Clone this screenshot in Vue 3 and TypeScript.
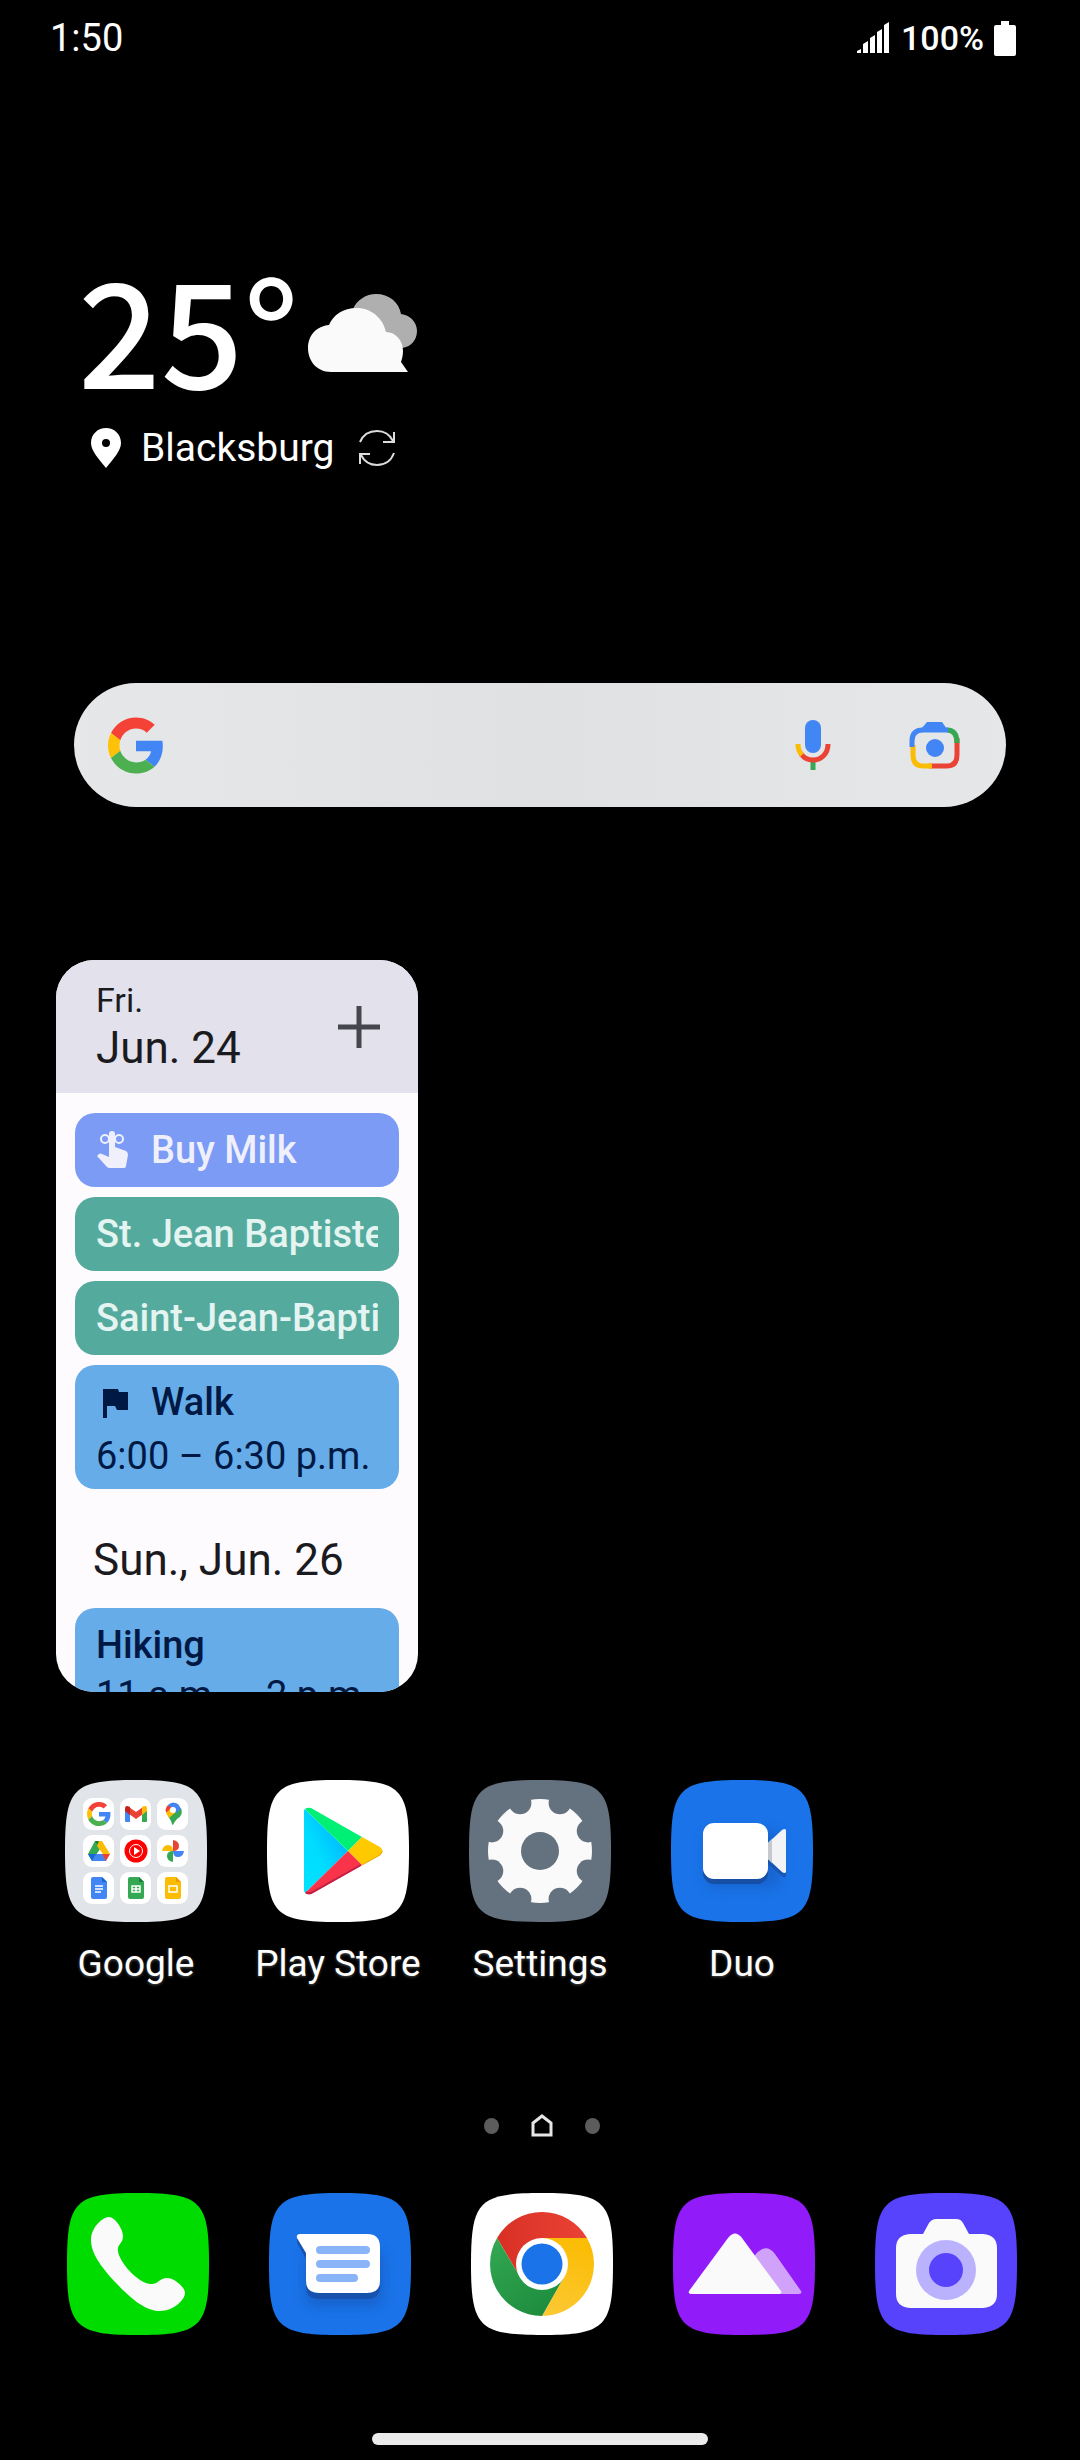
<script setup lang="ts">
import { ref } from 'vue'

interface CalendarEvent {
  title: string
  tone: 'task' | 'holiday' | 'plan'
  icon?: 'reminder' | 'flag'
  time?: string
}

const query = ref('')

const today: CalendarEvent[] = [
  { title: 'Buy Milk', tone: 'task', icon: 'reminder' },
  { title: 'St. Jean Baptiste Day', tone: 'holiday' },
  { title: 'Saint-Jean-Baptiste Day', tone: 'holiday' },
  { title: 'Walk', tone: 'plan', icon: 'flag', time: '6:00 – 6:30 p.m.' },
]
const sunday: CalendarEvent[] = [{ title: 'Hiking', tone: 'plan', time: '11 a.m. – 2 p.m.' }]

const squircle = 'M0 71C0 8 8 0 71 0S142 8 142 71 134 142 71 142 0 134 0 71Z'
const gearCuts = Array.from({ length: 8 }, (_, i) => {
  const a = ((22.5 + i * 45) * Math.PI) / 180
  return { x: 71 + 52 * Math.cos(a), y: 71 + 52 * Math.sin(a) }
})
const tiles = [0, 1, 2, 3, 4, 5, 6, 7, 8].map((i) => ({
  x: 18 + (i % 3) * 37,
  y: 18 + Math.floor(i / 3) * 37,
}))
</script>

<template>
  <div class="phone">
    <svg width="0" height="0" class="defs" aria-hidden="true">
      <defs>
        <symbol id="google-g" viewBox="0 0 48 48">
          <path fill="#f44336" d="M24 9.5c3.54 0 6.71 1.22 9.21 3.6l6.85-6.85C35.9 2.38 30.47 0 24 0 14.62 0 6.51 5.38 2.56 13.22l7.98 6.19C12.43 13.72 17.74 9.5 24 9.5z" />
          <path fill="#4285f4" d="M46.98 24.55c0-1.57-.15-3.09-.38-4.55H24v9.02h12.94c-.58 2.96-2.26 5.48-4.78 7.18l7.73 6c4.51-4.18 7.09-10.36 7.09-17.65z" />
          <path fill="#ffc107" d="M10.53 28.59c-.48-1.45-.76-2.99-.76-4.59s.27-3.14.76-4.59l-7.98-6.19C.92 16.46 0 20.12 0 24c0 3.88.92 7.54 2.56 10.78l7.97-6.19z" />
          <path fill="#4caf50" d="M24 48c6.48 0 11.93-2.13 15.89-5.81l-7.73-6c-2.15 1.45-4.92 2.3-8.16 2.3-6.26 0-11.57-4.22-13.47-9.91l-7.98 6.19C6.51 42.62 14.62 48 24 48z" />
        </symbol>
        <linearGradient id="play-blue" x1="1" y1="0" x2="0" y2="1">
          <stop offset="0" stop-color="#00a6ff" />
          <stop offset="0.6" stop-color="#00dcff" />
          <stop offset="1" stop-color="#00e2ff" />
        </linearGradient>
        <linearGradient id="chrome-red" x1="0" x2="1">
          <stop offset="0" stop-color="#d93025" />
          <stop offset="1" stop-color="#ea4335" />
        </linearGradient>
        <linearGradient id="chrome-green" x1="0" y1="0" x2="0.6" y2="1">
          <stop offset="0" stop-color="#34a853" />
          <stop offset="1" stop-color="#1e8e3e" />
        </linearGradient>
        <linearGradient id="chrome-yellow" x1="0.5" y1="0" x2="0.2" y2="1">
          <stop offset="0" stop-color="#fbbc04" />
          <stop offset="1" stop-color="#fcc934" />
        </linearGradient>
        <filter id="soft" x="-30%" y="-30%" width="160%" height="160%">
          <feGaussianBlur stdDeviation="6" />
        </filter>
      </defs>
    </svg>

    <header class="status">
      <time class="clock">1:50</time>
      <div class="indicators">
        <svg width="34" height="32" viewBox="0 0 34 32" fill="#fff" role="img" aria-label="Signal">
          <path d="M0 31V29L4 27V31ZM6 31V22L11 19V31ZM13 31V16L18 13V31ZM20 31V10L25 7V31ZM27 31V3L32 0V31Z" />
        </svg>
        <span class="percent">100%</span>
        <svg width="22" height="35" viewBox="0 0 22 35" fill="#fff" role="img" aria-label="Battery full">
          <path d="M7 0H15V4H20Q22 4 22 6V33Q22 35 20 35H2Q0 35 0 33V6Q0 4 2 4H7Z" />
        </svg>
      </div>
    </header>

    <section class="weather" aria-label="Weather">
      <div class="now">
        <span class="degrees">25°</span>
        <svg class="cloud" width="112" height="82" viewBox="0 0 112 82" role="img" aria-label="Cloudy">
          <path fill="#afafaf" d="M46 17C50 8 59 2 69 2C82 2 92 10 94 22C103 23 110 30 110 39C110 48 104 55 95 56L60 50Z" />
          <path fill="#fafafa" d="M24 80C10 80 1 69 1 56C1 43 10 34 22 33C26 23 36 16 50 16C64 16 76 26 79 40C89 40 96 49 96 59C96 63 95 67 94 70L101 80Z" />
        </svg>
      </div>
      <div class="place">
        <svg class="pin" width="30" height="42" viewBox="0 0 30 42" aria-hidden="true">
          <path fill="#fff" fill-rule="evenodd" d="M15 1C23 1 30 7 30 16C30 24 22 32 15 41C8 32 0 24 0 16C0 7 7 1 15 1ZM15 12A4 4 0 1 0 15 20A4 4 0 1 0 15 12Z" />
        </svg>
        <span class="city">Blacksburg</span>
        <button class="bare" type="button" aria-label="Refresh">
          <svg width="38" height="38" viewBox="0 0 38 38" fill="none" stroke="#dcdcdc" stroke-width="2">
            <path d="M2 13C5 6 11 2 19 2C26 2 32 6 35 12M36 3V13H25M36 24C33 32 27 36 19 36C12 36 6 32 3 26M2 35V25H12" />
          </svg>
        </button>
      </div>
    </section>

    <form class="search" role="search" @submit.prevent>
      <svg width="56" height="57"><use href="#google-g" /></svg>
      <input v-model="query" class="field" type="text" aria-label="Search" />
      <button class="bare mic" type="button" aria-label="Voice search">
        <svg width="36" height="52" viewBox="0 0 36 52" fill="none" stroke-width="5">
          <rect x="10" y="1" width="16" height="33" rx="8" fill="#4285f4" />
          <path stroke="#34a853" d="M18 42V51" />
          <path stroke="#ea4335" d="M33 25C33 35 26 41 18 41C13 41 9 39 6 35" />
          <path stroke="#fbbc04" d="M3 25C3 30 4 33 7 36" />
        </svg>
      </button>
      <button class="bare" type="button" aria-label="Search with camera">
        <svg width="52" height="49" viewBox="0 0 52 49" fill="none" stroke-width="5">
          <path stroke="#ea4335" d="M48 17V34Q48 45 38 45H20" />
          <path stroke="#fbbc04" d="M23 45H14Q4 45 4 34V24L3 26" />
          <path stroke="#34a853" d="M38 9Q48 9 48 22" />
          <path stroke="#4285f4" d="M3 26V20Q3 9 14 9H39" />
          <path fill="#4285f4" d="M12 8L18 1H33L40 11H12Z" />
          <circle cx="26" cy="27" r="9" fill="#4285f4" />
        </svg>
      </button>
    </form>

    <section class="calendar" aria-label="Calendar">
      <header class="day">
        <div>
          <div class="weekday">Fri.</div>
          <div class="date">Jun. 24</div>
        </div>
        <button class="bare" type="button" aria-label="Add event">
          <svg width="42" height="42" viewBox="0 0 42 42" fill="none" stroke="#46464f" stroke-width="5"><path d="M21 0V42M0 21H42" /></svg>
        </button>
      </header>
      <div class="agenda">
        <article v-for="event in today" :key="event.title" class="event" :class="[event.tone, { timed: event.time }]">
          <div class="title">
            <svg v-if="event.icon === 'reminder'" class="mark" width="32" height="38" viewBox="0 0 32 38" aria-hidden="true">
              <path fill="currentColor" d="M13 3Q13 0 16 0T19 3V16L30 20Q32 21 32 24L30 35Q30 37 28 37H14Q12 37 11 36L1 25L3 23Q4 22 6 23L13 26Z" />
              <g fill="none" stroke="currentColor" stroke-width="2"><circle cx="9" cy="8" r="4" /><circle cx="23" cy="8" r="4" /></g>
            </svg>
            <svg v-else-if="event.icon === 'flag'" class="mark" width="32" height="38" viewBox="0 0 32 38" aria-hidden="true">
              <path fill="currentColor" d="M7 6H22L23 9H32V27H21L19 23H11V35H7Z" />
            </svg>
            <span>{{ event.title }}</span>
          </div>
          <div v-if="event.time" class="time">{{ event.time }}</div>
        </article>
        <h2 class="heading">Sun., Jun. 26</h2>
        <article v-for="event in sunday" :key="event.title" class="event timed" :class="event.tone">
          <div class="title">{{ event.title }}</div>
          <div class="time">{{ event.time }}</div>
        </article>
      </div>
    </section>

    <nav class="row apps" aria-label="Apps">
      <button class="app" type="button">
        <svg width="142" height="142" viewBox="0 0 142 142">
          <path :d="squircle" fill="#e1e4e8" />
          <rect v-for="(t, i) in tiles" :key="i" :x="t.x" :y="t.y" width="31" height="32" rx="9" fill="#fff" />
          <svg x="22" y="22" width="24" height="24"><use href="#google-g" /></svg>
          <g transform="translate(60 26)">
            <path fill="#4285f4" d="M0 3L5 6V16H1Q0 16 0 15Z" />
            <path fill="#34a853" d="M22 3L17 6V16H21Q22 16 22 15Z" />
            <path fill="#ea4335" d="M4 1L11 6L18 1V8L11 13L4 8Z" />
            <path fill="#c5221f" d="M0 3Q0 -2 5 1V9L0 5Z" />
            <path fill="#fbbc04" d="M22 3Q22 -2 17 1V9L22 5Z" />
          </g>
          <g transform="translate(100 22)">
            <path fill="#34a853" d="M16 6Q19 13 12 17Q10 19 8 23Q7 23 6 19L3 14Z" />
            <path fill="#4285f4" d="M3 3Q8 -2 14 3L6 11Z" />
            <path fill="#ea4335" d="M3 3L8 7L3 12Q-2 8 3 3Z" />
            <path fill="#fbbc04" d="M1 11L7 5L11 10L4 16Z" />
            <path fill="#4285f4" d="M10 1Q14 2 16 7L11 11L8 6Z" />
            <circle cx="8" cy="8" r="3" fill="#fff" />
          </g>
          <g transform="translate(23 61)">
            <path fill="#34a853" d="M7 0H11L14 5L4 20L0 13Z" />
            <path fill="#188038" d="M7 0H14L11 6Z" />
            <path fill="#fbbc04" d="M11 0H14L22 13H15L9 5Z" />
            <path fill="#4285f4" d="M4 13H18V20H4Z" />
            <path fill="#1967d2" d="M0 13H8L4 20Z" />
            <path fill="#ea4335" d="M14 13H22L18 20Z" />
          </g>
          <circle cx="71" cy="71" r="11.5" fill="#f00" />
          <circle cx="71" cy="71" r="6.5" fill="none" stroke="#fff" />
          <path fill="#fff" d="M69 67L75 71L69 75Z" />
          <g transform="translate(97 60)">
            <path fill="#ea4335" d="M11 0Q17 1 17 6T11 11Z" />
            <path fill="#4285f4" d="M11 11H22Q21 17 16 17T11 11Z" />
            <path fill="#34a853" d="M11 11V22Q5 21 5 16T11 11Z" />
            <path fill="#fbbc04" d="M0 11Q1 5 6 5T11 11Z" />
          </g>
          <path fill="#4285f4" d="M28 97H37L42 102V117Q42 119 40 119H28Q26 119 26 117V99Q26 97 28 97Z" />
          <path fill="#1967d2" d="M37 97L42 102H37Z" />
          <path stroke="#fff" stroke-width="1.5" d="M30 106H38M30 109H38M30 112H36" />
          <path fill="#34a853" d="M65 97H74L79 102V117Q79 119 77 119H65Q63 119 63 117V99Q63 97 65 97Z" />
          <path fill="#188038" d="M74 97L79 102H74Z" />
          <path fill="none" stroke="#fff" stroke-width="1.5" d="M67 106H75V112H67ZM67 109H75M71 106V112" />
          <path fill="#fbbc04" d="M102 97H111L116 102V117Q116 119 114 119H102Q100 119 100 117V99Q100 97 102 97Z" />
          <path fill="#f29900" d="M111 97L116 102H111Z" />
          <path fill="none" stroke="#fff" stroke-width="1.5" d="M104 106H112V112H104Z" />
        </svg>
        <span>Google</span>
      </button>
      <button class="app" type="button">
        <svg width="142" height="142" viewBox="0 0 142 142">
          <path :d="squircle" fill="#fff" />
          <path fill="url(#play-blue)" d="M38 29L81 71L38 113Q37 112 37 110V31Q37 30 38 29Z" />
          <path fill="#00f076" d="M38 29Q40 27 44 28L95 57L81 71Z" />
          <path fill="#ffc900" d="M95 57L113 67Q118 71 113 75L95 85L81 71Z" />
          <path fill="#f8334a" d="M81 71L95 85L44 114Q40 115 38 113Z" />
          <path fill="none" stroke="#c31f45" stroke-width="2" d="M94 85L44 113Q41 114 39 112" />
          <path fill="none" stroke="#e5a900" stroke-width="1" d="M95 85L113 75Q115 73 115 71" />
        </svg>
        <span>Play Store</span>
      </button>
      <button class="app" type="button">
        <svg width="142" height="142" viewBox="0 0 142 142">
          <path :d="squircle" fill="#64717e" />
          <circle cx="71" cy="71" r="52" fill="#fafafa" />
          <circle v-for="(c, i) in gearCuts" :key="i" :cx="c.x" :cy="c.y" r="11.3" fill="#64717e" />
          <circle cx="71" cy="71" r="19" fill="#64717e" />
        </svg>
        <span>Settings</span>
      </button>
      <button class="app" type="button">
        <svg width="142" height="142" viewBox="0 0 142 142">
          <path :d="squircle" fill="#1a73e8" />
          <rect x="34" y="50" width="76" height="58" rx="12" fill="#1557b8" opacity="0.5" filter="url(#soft)" />
          <rect x="32" y="48" width="65" height="56" rx="11" fill="#174ea6" />
          <path fill="#174ea6" d="M97 84V72L115 90V96Q114 98 112 97Z" opacity="0.7" />
          <path fill="#f1f3f4" d="M97 63L111 50Q114 48 115 50V92Q114 94 111 92L97 79Z" />
          <path fill="#c5c9ce" d="M97 63L101 59V83L97 79Z" />
          <rect x="32" y="43" width="65" height="56" rx="11" fill="#fff" />
        </svg>
        <span>Duo</span>
      </button>
    </nav>

    <div class="pages" aria-hidden="true">
      <span class="dot"></span>
      <svg width="22" height="24" viewBox="0 0 22 24" fill="none" stroke="#e6e6e6" stroke-width="3"><path d="M2 21V9L11 2L20 9V21Z" /></svg>
      <span class="dot"></span>
    </div>

    <nav class="row dock" aria-label="Dock">
      <button class="app" type="button" aria-label="Phone">
        <svg width="142" height="142" viewBox="0 0 142 142">
          <path :d="squircle" fill="#00dc00" />
          <path fill="#fafafa" d="M42 24C48 24 56 36 56 43C56 51 50 51 51 58C52 69 71 90 83 91C91 92 92 85 100 85C107 85 118 94 118 100C118 107 106 118 93 118C81 118 68 110 50 91C32 72 24 59 24 47C24 34 36 24 42 24Z" />
        </svg>
      </button>
      <button class="app" type="button" aria-label="Messages">
        <svg width="142" height="142" viewBox="0 0 142 142">
          <path :d="squircle" fill="#1a73e8" />
          <rect x="36" y="55" width="78" height="58" rx="12" fill="#1557b8" opacity="0.6" filter="url(#soft)" />
          <path fill="#174ea6" opacity="0.8" d="M28 45L37 55H111V93Q111 106 98 106H50Q37 106 37 93V66L28 50Z" />
          <path fill="#fff" d="M31 41H98Q111 41 111 54V88Q111 100 98 100H50Q37 100 37 88V60L28 45Q27 41 31 41Z" />
          <path stroke="#8ab4f8" stroke-width="8" stroke-linecap="round" d="M51 57H97M51 71H97M51 85H85" />
        </svg>
      </button>
      <button class="app" type="button" aria-label="Chrome">
        <svg width="142" height="142" viewBox="0 0 142 142">
          <path :d="squircle" fill="#fff" />
          <path fill="url(#chrome-red)" d="M26 45A52 52 0 0 1 116 45H71L49 84Z" />
          <path fill="url(#chrome-yellow)" d="M116 45A52 52 0 0 1 71 123L93 84L71 45Z" />
          <path fill="url(#chrome-green)" d="M71 123A52 52 0 0 1 26 45L49 84L71 71L93 84Z" />
          <circle cx="71" cy="71" r="26" fill="#fff" />
          <circle cx="71" cy="71" r="20.5" fill="#1a73e8" />
        </svg>
      </button>
      <button class="app" type="button" aria-label="Gallery">
        <svg width="142" height="142" viewBox="0 0 142 142">
          <path :d="squircle" fill="#921bfa" />
          <path fill="#d1a2fa" d="M82 62Q93 49 102 61L128 98Q129 101 126 101H80Z" />
          <path fill="#fafafa" d="M55 45Q62 36 69 45L108 98Q109 101 106 101H18Q15 101 16 98Z" />
        </svg>
      </button>
      <button class="app" type="button" aria-label="Camera">
        <svg width="142" height="142" viewBox="0 0 142 142">
          <path :d="squircle" fill="#5843fd" />
          <path fill="#fafafa" d="M48 41L54 30Q57 26 61 26H81Q86 26 88 30L94 41H108Q122 42 122 55V101Q122 114 108 115H35Q21 114 21 101V55Q21 42 35 41Z" />
          <circle cx="71" cy="77" r="30" fill="#bbb2fd" />
          <circle cx="71" cy="77" r="17" fill="#5843fd" />
        </svg>
      </button>
    </nav>

    <div class="gesture" aria-hidden="true"></div>
  </div>
</template>

<style>
body {
  background: #000;
}
</style>

<style scoped>
.phone {
  display: flex;
  flex-direction: column;
  min-height: 100vh;
  box-sizing: border-box;
  padding-bottom: 15px;
  overflow: hidden;
  background: #000;
  color: #fff;
  font-family: Roboto, "Noto Sans", sans-serif;
}
.defs {
  position: absolute;
}
svg {
  display: block;
  flex: none;
}
button {
  margin: 0;
  padding: 0;
  border: 0;
  background: none;
  color: inherit;
  font: inherit;
  cursor: pointer;
}
.bare {
  display: block;
  flex: none;
}
.status {
  display: flex;
  align-items: center;
  justify-content: space-between;
  height: 76px;
  padding: 0 64px 0 50px;
}
.clock {
  font-size: 38px;
  line-height: 44px;
}
.indicators {
  display: flex;
  align-items: center;
  gap: 10px;
}
.percent {
  font-size: 34px;
  line-height: 44px;
  font-weight: 500;
}
.weather {
  padding: 174px 78px 0;
}
.now {
  display: flex;
  align-items: center;
}
.degrees {
  font-family: "Noto Sans CJK SC", "Noto Sans", sans-serif;
  font-size: 145px;
  line-height: 152px;
  font-weight: 500;
}
.cloud {
  margin: 14px 0 0 8px;
}
.place {
  display: flex;
  align-items: center;
  height: 48px;
  margin-top: 22px;
  padding-left: 13px;
}
.city {
  margin: 0 24px 0 20px;
  font-size: 39px;
  line-height: 48px;
}
.search {
  display: flex;
  align-items: center;
  height: 124px;
  margin: 211px 74px 0;
  padding: 0 45px 0 34px;
  box-sizing: border-box;
  border-radius: 62px;
  background: linear-gradient(90deg, #e5e7e9, #dfe1e3 50%, #e5e7e9);
}
.field {
  flex: 1;
  min-width: 0;
  height: 100%;
  border: 0;
  padding: 0 24px;
  outline: 0;
  background: none;
  color: #202124;
  font: inherit;
  font-size: 38px;
}
.mic {
  margin-right: 78px;
}
.calendar {
  width: 362px;
  height: 732px;
  margin: 153px 0 0 56px;
  overflow: hidden;
  border-radius: 38px;
  background: #fefbff;
  color: #1b1b1f;
}
.day {
  display: flex;
  align-items: center;
  justify-content: space-between;
  box-sizing: border-box;
  height: 133px;
  padding: 0 38px 0 40px;
  background: #e2e1ec;
}
.weekday {
  font-size: 34px;
  line-height: 44px;
}
.date {
  font-size: 44px;
  line-height: 52px;
  padding-bottom: 2px;
}
.agenda {
  display: flex;
  flex-direction: column;
  gap: 10px;
  padding: 20px 19px 0;
}
.event {
  padding: 12px 21px;
  border-radius: 20px;
  font-size: 38px;
  line-height: 50px;
  white-space: nowrap;
}
.timed {
  padding-bottom: 8px;
}
.title {
  display: flex;
  align-items: center;
  overflow: hidden;
  font-weight: 500;
}
.timed .title:has(.mark) {
  margin-bottom: 4px;
}
.mark {
  margin-right: 23px;
}
.time {
  overflow: hidden;
}
.task {
  background: #7b9bf5;
  color: #eff0fb;
}
.holiday {
  background: #55aa9e;
  color: #e4f4f1;
}
.plan {
  background: #66ace9;
  color: #001944;
}
.heading {
  margin: 35px 0 12px;
  padding-left: 18px;
  font-size: 44px;
  line-height: 52px;
  font-weight: 400;
}
.row {
  display: grid;
  grid-template-columns: repeat(5, 1fr);
}
.apps {
  padding: 0 35px;
  margin-top: 88px;
}
.app {
  display: flex;
  flex-direction: column;
  align-items: center;
  gap: 20px;
  font-size: 37px;
  line-height: 44px;
  white-space: nowrap;
  text-shadow: 0 1px 3px rgba(255, 255, 255, 0.3);
}
.pages {
  display: flex;
  align-items: center;
  justify-content: center;
  gap: 32px;
  height: 24px;
  margin: 128px 0 55px;
  padding-left: 3px;
}
.dot {
  width: 15px;
  height: 16px;
  border-radius: 50%;
  background: #5c5c5c;
}
.dock {
  padding: 0 33px 0 37px;
}
.gesture {
  align-self: center;
  width: 336px;
  height: 12px;
  margin-top: auto;
  border-radius: 6px;
  background: #ebebeb;
}
</style>
